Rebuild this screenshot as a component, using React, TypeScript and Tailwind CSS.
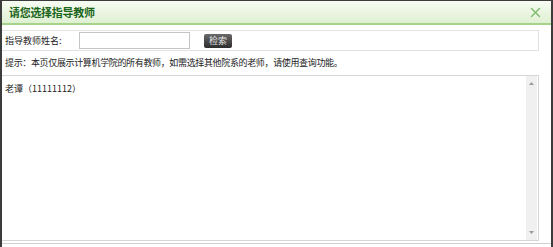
export default function App() {
  const cjk = { fontFamily: '"SimSun", "Noto Sans CJK SC", sans-serif' };

  return (
    <div className="w-[553px] h-[247px] bg-white border-x-2 border-t border-[#3c3c3c] flex flex-col overflow-hidden" style={cjk}>
      {/* Title bar */}
      <div className="h-[24px] shrink-0 flex items-center justify-between pl-[7px] pr-[8px] bg-gradient-to-b from-[#f7fcf3] to-[#dff0d2] border-b-2 border-[#a6d38c]">
        <span className="text-[11px] font-bold text-[#1a651a] tracking-[-0.3px]">请您选择指导教师</span>
        <svg width="11" height="11" viewBox="0 0 11 11" className="mr-[2px]">
          <path d="M1.5 1.5 L9.5 9.5 M9.5 1.5 L1.5 9.5" stroke="#7dbb6c" strokeWidth="1.4" strokeLinecap="round" />
        </svg>
      </div>

      {/* Search row */}
      <div className="mt-[5px] mr-[12px] h-[21px] shrink-0 flex items-center border-y border-r border-[#e2e2e2] pl-[3px] text-[9px] text-[#222]">
        <span className="w-[74px]">指导教师姓名:</span>
        <input className="w-[111px] h-[17px] border border-[#c4c4c4] bg-white outline-none" />
        <button className="ml-[14px] w-[28px] h-[14px] rounded-[2px] bg-gradient-to-b from-[#6a6a6a] to-[#2e2e2e] text-[#e6e6e6] text-[9px] leading-none flex items-center justify-center">
          检索
        </button>
      </div>

      {/* Hint row */}
      <div className="h-[24px] shrink-0 flex items-center pl-[3px] text-[9px] text-[#222] tracking-[-0.35px]">
        提示：本页仅展示计算机学院的所有教师，如需选择其他院系的老师，请使用查询功能。
      </div>

      {/* List area */}
      <div className="mr-[12px] h-[166px] shrink-0 flex border border-l-0 border-[#d6d6d6]">
        <div className="flex-1 pl-[3px] pt-[6px] text-[9px] text-[#222]">老谭（11111112）</div>
        <div className="w-[11px] mr-[1px] bg-[#f0f0f0] flex flex-col items-center justify-between py-[6px]">
          <svg width="5" height="3" viewBox="0 0 5 3"><path d="M0 3 L2.5 0 L5 3 Z" fill="#9a9a9a" /></svg>
          <svg width="5" height="3" viewBox="0 0 5 3"><path d="M0 0 L2.5 3 L5 0 Z" fill="#9a9a9a" /></svg>
        </div>
      </div>

      <div className="mt-[2px] h-px bg-[#d0d0d0]" />
    </div>
  );
}
